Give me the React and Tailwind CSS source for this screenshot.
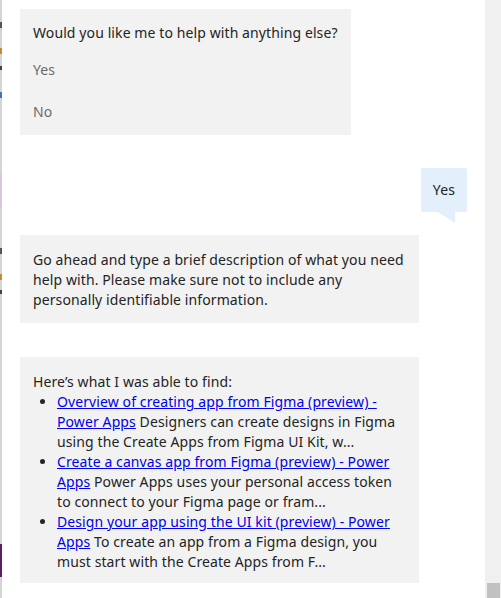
import React from 'react';

const FONT = { fontFamily: '"Noto Sans", "Open Sans", sans-serif' };

const results = [
  {
    title: 'Overview of creating app from Figma (preview) - Power Apps',
    text: 'Designers can create designs in Figma using the Create Apps from Figma UI Kit, w...',
  },
  {
    title: 'Create a canvas app from Figma (preview) - Power Apps',
    text: 'Power Apps uses your personal access token to connect to your Figma page or fram...',
  },
  {
    title: 'Design your app using the UI kit (preview) - Power Apps',
    text: 'To create an app from a Figma design, you must start with the Create Apps from F...',
  },
];

const EdgeStrip = () => (
  <div className="w-[2px] flex flex-col bg-[#d4d4d4]">
    <div className="h-[22px]" />
    <div className="h-[6px] bg-[#555]" />
    <div className="h-[20px]" />
    <div className="h-[6px] bg-[#c58a3a]" />
    <div className="h-[12px]" />
    <div className="h-[4px] bg-[#444]" />
    <div className="h-[22px]" />
    <div className="h-[6px] bg-[#4a6fc0]" />
    <div className="h-[75px]" />
    <div className="h-[35px] bg-[#d8c8dc]" />
    <div className="h-[40px]" />
    <div className="h-[6px] bg-[#555]" />
    <div className="h-[20px]" />
    <div className="h-[6px] bg-[#c58a3a]" />
    <div className="h-[10px]" />
    <div className="h-[4px] bg-[#444]" />
    <div className="h-[250px]" />
    <div className="h-[33px] bg-[#5b1f63]" />
    <div className="flex-1" />
  </div>
);

export default function App() {
  return (
    <div className="h-[598px] w-[501px] flex bg-white overflow-hidden text-[14px] leading-[20px] tracking-[0.1px] text-[#242424]" style={FONT}>
      <EdgeStrip />
      <div className="flex-1 flex flex-col pl-[18px] pr-[18px] pt-[9px]">
        {/* question with choices */}
        <div className="self-start bg-[#f2f2f2] px-[13px] pt-[14px] pb-[2px]">
          <p>Would you like me to help with anything else?</p>
          <div className="flex flex-col mt-[6px] text-[#6b6b6b]">
            <button className="h-[42px] text-left">Yes</button>
            <button className="h-[42px] text-left">No</button>
          </div>
        </div>

        {/* user reply */}
        <div className="self-end mt-[33px] flex flex-col items-end">
          <div className="bg-[#e3effa] rounded-[2px] px-[12px] py-[12px] text-[#242424]">Yes</div>
          <svg width="17" height="11" viewBox="0 0 17 11" className="block mr-[12px]">
            <polygon points="0,0 17,0 17,11" fill="#e3effa" />
          </svg>
        </div>

        <div className="self-start w-[399px] mt-[12px] bg-[#f2f2f2] px-[13px] pt-[15px] pb-[13px]">
          Go ahead and type a brief description of what you need help with. Please make sure not to include any personally identifiable information.
        </div>

        <div className="self-start w-[399px] mt-[34px] bg-[#f2f2f2] px-[13px] pt-[15px] pb-[11px]">
          <p>Here’s what I was able to find:</p>
          <ul className="list-disc pl-[24px]">
            {results.map((r) => (
              <li key={r.title}>
                <a href="#" className="text-[#0000ee] underline">{r.title}</a> {r.text}
              </li>
            ))}
          </ul>
        </div>
      </div>

      {/* scrollbar */}
      <div className="w-[16px] bg-[#f0f0f0] flex flex-col justify-end items-center">
        <div className="w-[13px] h-[15px] bg-[#c1c1c1]" />
      </div>
    </div>
  );
}
